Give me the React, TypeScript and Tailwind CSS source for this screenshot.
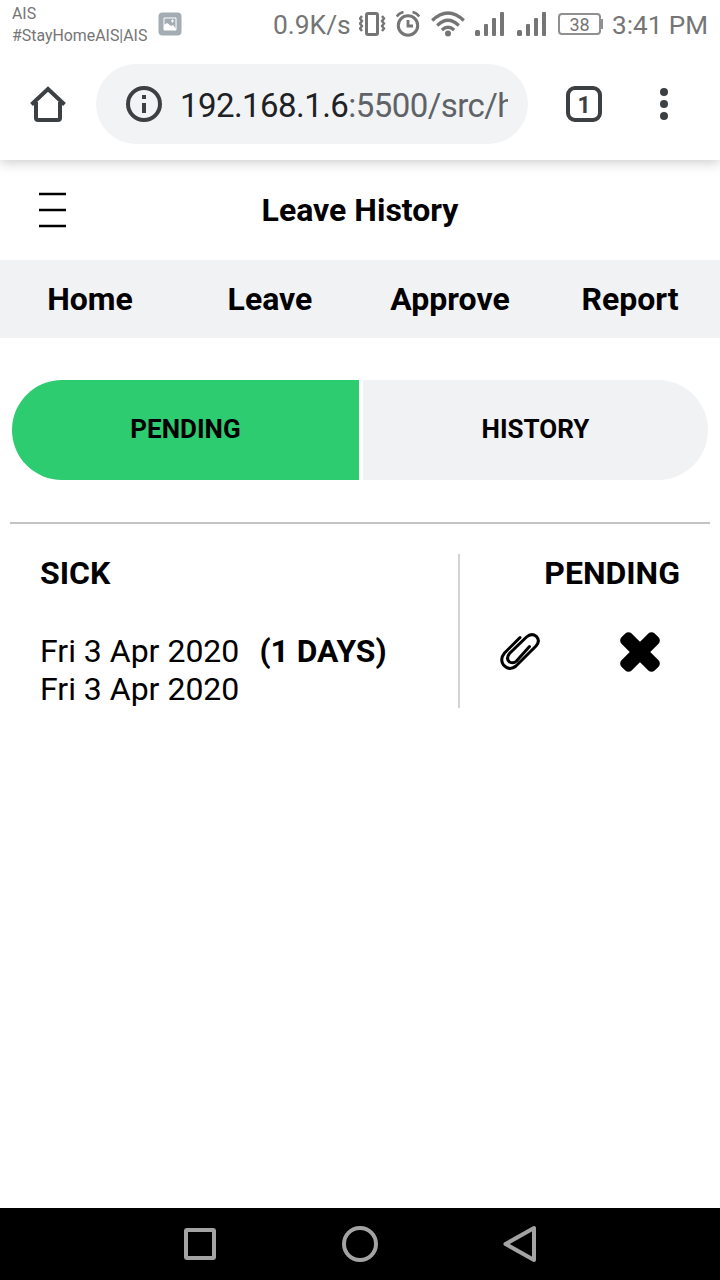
import React from "react";

function Signal() {
  return (
    <svg width="30" height="26" viewBox="0 0 30 26" fill="#757575" className="shrink-0">
      <rect x="0" y="19" width="5" height="6" rx="1.5" />
      <rect x="9" y="13" width="4" height="12" rx="1" />
      <rect x="17" y="7" width="4" height="18" rx="1" />
      <rect x="25" y="1" width="4" height="24" rx="1" />
    </svg>
  );
}

function StatusBar() {
  return (
    <div className="relative z-10 flex h-12 items-start bg-white text-[#757575]">
      <div className="ml-3 mt-[3px] w-[146px] text-[15.9px] leading-[22px] whitespace-nowrap">
        <div>AIS</div>
        <div>#StayHomeAIS|AIS</div>
      </div>
      <svg width="24" height="24" viewBox="0 0 24 24" className="mt-3 shrink-0">
        <rect x="0.5" y="0.5" width="23" height="23" rx="4" fill="#a3adb3" />
        <path d="M6 6h12v12H6z" fill="none" stroke="#fff" />
        <path d="M6 13l3-2 4 3 2-1 3 4v1H6z" fill="#fff" />
        <path d="M14.5 7.5v3M13 9h3" stroke="#fff" />
      </svg>
      <div className="ml-[91px] mt-[9px] w-[86px] text-[26.4px] leading-8 whitespace-nowrap">0.9K/s</div>
      <svg width="28" height="26" viewBox="0 0 28 26" className="mt-[11px] shrink-0" fill="none" stroke="#757575">
        <rect x="7.5" y="2.5" width="11" height="21" rx="1.5" strokeWidth="3" />
        <path d="M3 5L1 7.5l2 2.5-2 2.5L3 15l-2 2.5L3 20M23 5l2 2.5-2 2.5 2 2.5-2 2.5 2 2.5-2 2.5" strokeWidth="2.4" />
      </svg>
      <svg width="26" height="27" viewBox="0 0 26 27" className="ml-[9px] mt-2.5 shrink-0" fill="none" stroke="#757575">
        <circle cx="12" cy="15.5" r="9.7" strokeWidth="3" />
        <path d="M12 10v6h5" strokeWidth="2.8" />
        <path d="M0.8 6.5Q3 3 7.5 2M16.5 2q4.5 1 6.7 4.5" strokeWidth="2.4" />
      </svg>
      <svg width="34" height="26" viewBox="0 0 34 26" className="ml-[9px] mt-[11px] shrink-0" fill="none" stroke="#757575" strokeWidth="3.2">
        <path d="M1.2 9.5Q17-5.5 32.8 9.5M6.2 14.5Q17 4 27.8 14.5M10.8 19Q17 13.5 23.2 19" />
        <circle cx="17" cy="22.5" r="3" fill="#757575" stroke="none" />
      </svg>
      <div className="ml-2.5 mt-[11px] flex gap-3">
        <Signal />
        <Signal />
      </div>
      <div className="ml-[11px] mt-[13px] flex items-center">
        <div className="flex h-[22px] w-[43px] items-center justify-center rounded-[4px] border-2 border-[#909090] pt-0.5 text-[18px] leading-none">38</div>
        <div className="h-2.5 w-0.5 bg-[#909090]" />
      </div>
      <div className="ml-[9px] mt-[9px] text-[26.1px] leading-8 whitespace-nowrap">3:41 PM</div>
    </div>
  );
}

function BrowserBar() {
  return (
    <div className="relative flex h-28 items-center shadow-[0_2px_12px_rgba(0,0,0,0.22)]">
      <svg width="36" height="36" viewBox="0 0 36 36" className="ml-[30px] shrink-0" fill="none" stroke="#3c4043" strokeWidth="4">
        <path d="M6 16v16q0 2 2 2h20q2 0 2-2V16" />
        <path d="M1.5 18.5L18 3l16.5 15.5" />
      </svg>
      <div className="ml-[30px] flex h-20 w-[432px] items-center rounded-full bg-[#f1f3f4]">
        <svg width="36" height="36" viewBox="0 0 36 36" className="ml-[30px] shrink-0">
          <circle cx="18" cy="18" r="16" fill="none" stroke="#3c4043" strokeWidth="4" />
          <path d="M16 9h4v4h-4zM16 17h4v10h-4z" fill="#3c4043" />
        </svg>
        <div className="ml-[18px] mt-1 w-[328px] overflow-hidden text-[33px] leading-10 tracking-[-0.56px] whitespace-nowrap text-[#5f6368]">
          <span className="text-[#202124]">192.168.1.6</span>:5500/src/h
        </div>
      </div>
      <div className="ml-[38px] flex h-9 w-9 items-center justify-center rounded-[9px] border-4 border-[#3c4043] pt-0.5 text-[23px] font-bold leading-none text-[#3c4043]">1</div>
      <svg width="8" height="32" viewBox="0 0 8 32" className="ml-[58px] shrink-0" fill="#3c4043">
        <circle cx="4" cy="4" r="4" />
        <circle cx="4" cy="16" r="4" />
        <circle cx="4" cy="28" r="4" />
      </svg>
    </div>
  );
}

export default function App() {
  return (
    <div className="flex h-[1280px] w-[720px] flex-col overflow-hidden bg-white font-[Roboto,sans-serif] text-black">
      <StatusBar />
      <BrowserBar />
      <header className="grid h-[100px] grid-cols-[105px_1fr_105px] items-center">
        <svg width="27" height="36" viewBox="0 0 27 36" className="ml-[39px]" stroke="#000" strokeWidth="2.6">
          <path d="M0 2h27M0 18h27M0 34h27" />
        </svg>
        <h1 className="text-center text-[32px] leading-10 font-bold">Leave History</h1>
      </header>
      <nav className="grid h-[78px] grid-cols-4 items-center bg-[#f1f2f4] text-center text-[32px] font-bold">
        <a>Home</a>
        <a>Leave</a>
        <a>Approve</a>
        <a>Report</a>
      </nav>
      <div className="mx-3 mt-[42px] flex h-[100px] gap-1 text-[26px] font-bold">
        <button className="w-[347px] rounded-l-full bg-[#2ecc71] pb-0.5">PENDING</button>
        <button className="w-[345px] rounded-r-full bg-[#f1f2f4] pb-0.5">HISTORY</button>
      </div>
      <main className="mx-2.5 mt-[42px] grow border-t-2 border-[#c4c4c4] pt-[30px]">
        <div className="flex h-[154px]">
          <section className="w-[450px] border-r-2 border-[#d3d3d3] pl-[30px] text-[32px] leading-[38px]">
            <h2 className="font-bold">SICK</h2>
            <div className="mt-10 flex">
              <span className="w-[219.5px]">Fri 3 Apr 2020</span>
              <b className="text-[31.8px]">(1 DAYS)</b>
            </div>
            <div>Fri 3 Apr 2020</div>
          </section>
          <section className="flex w-[250px] flex-col">
            <h2 className="pr-[30px] text-right text-[32px] leading-[38px] font-bold">PENDING</h2>
            <div className="mt-10 ml-10 flex gap-20">
              <svg width="40" height="40" viewBox="0 0 40 40" fill="none" stroke="#000" strokeWidth="3" strokeLinecap="round">
                <path d="M20 5.5L4.5 21Q-0.500 27 3.500 33q6 6.500 12.500 1l20-20q4.500-5 0.500-9.500-5-4-10 0.500L9.500 21.500q-4 5 0 8.500 4 2 7-1l13-14.500" />
              </svg>
              <svg width="40" height="40" viewBox="-20 -20 40 40">
                <rect x="-23.5" y="-7.2" width="47" height="14.4" rx="4.5" transform="rotate(45)" />
                <rect x="-23.5" y="-7.2" width="47" height="14.4" rx="4.5" transform="rotate(-45)" />
              </svg>
            </div>
          </section>
        </div>
      </main>
      <footer className="flex h-[72px] shrink-0 items-center bg-black">
        <div className="ml-[184px] h-8 w-8 rounded-[3px] border-4 border-[#a3a3a3]" />
        <div className="ml-[126px] h-9 w-9 rounded-full border-4 border-[#a3a3a3]" />
        <svg width="34" height="38" viewBox="0 0 34 38" className="ml-[125px]" fill="none" stroke="#a3a3a3" strokeWidth="4" strokeLinejoin="round">
          <path d="M31 3v32L2.500 19z" />
        </svg>
      </footer>
    </div>
  );
}
